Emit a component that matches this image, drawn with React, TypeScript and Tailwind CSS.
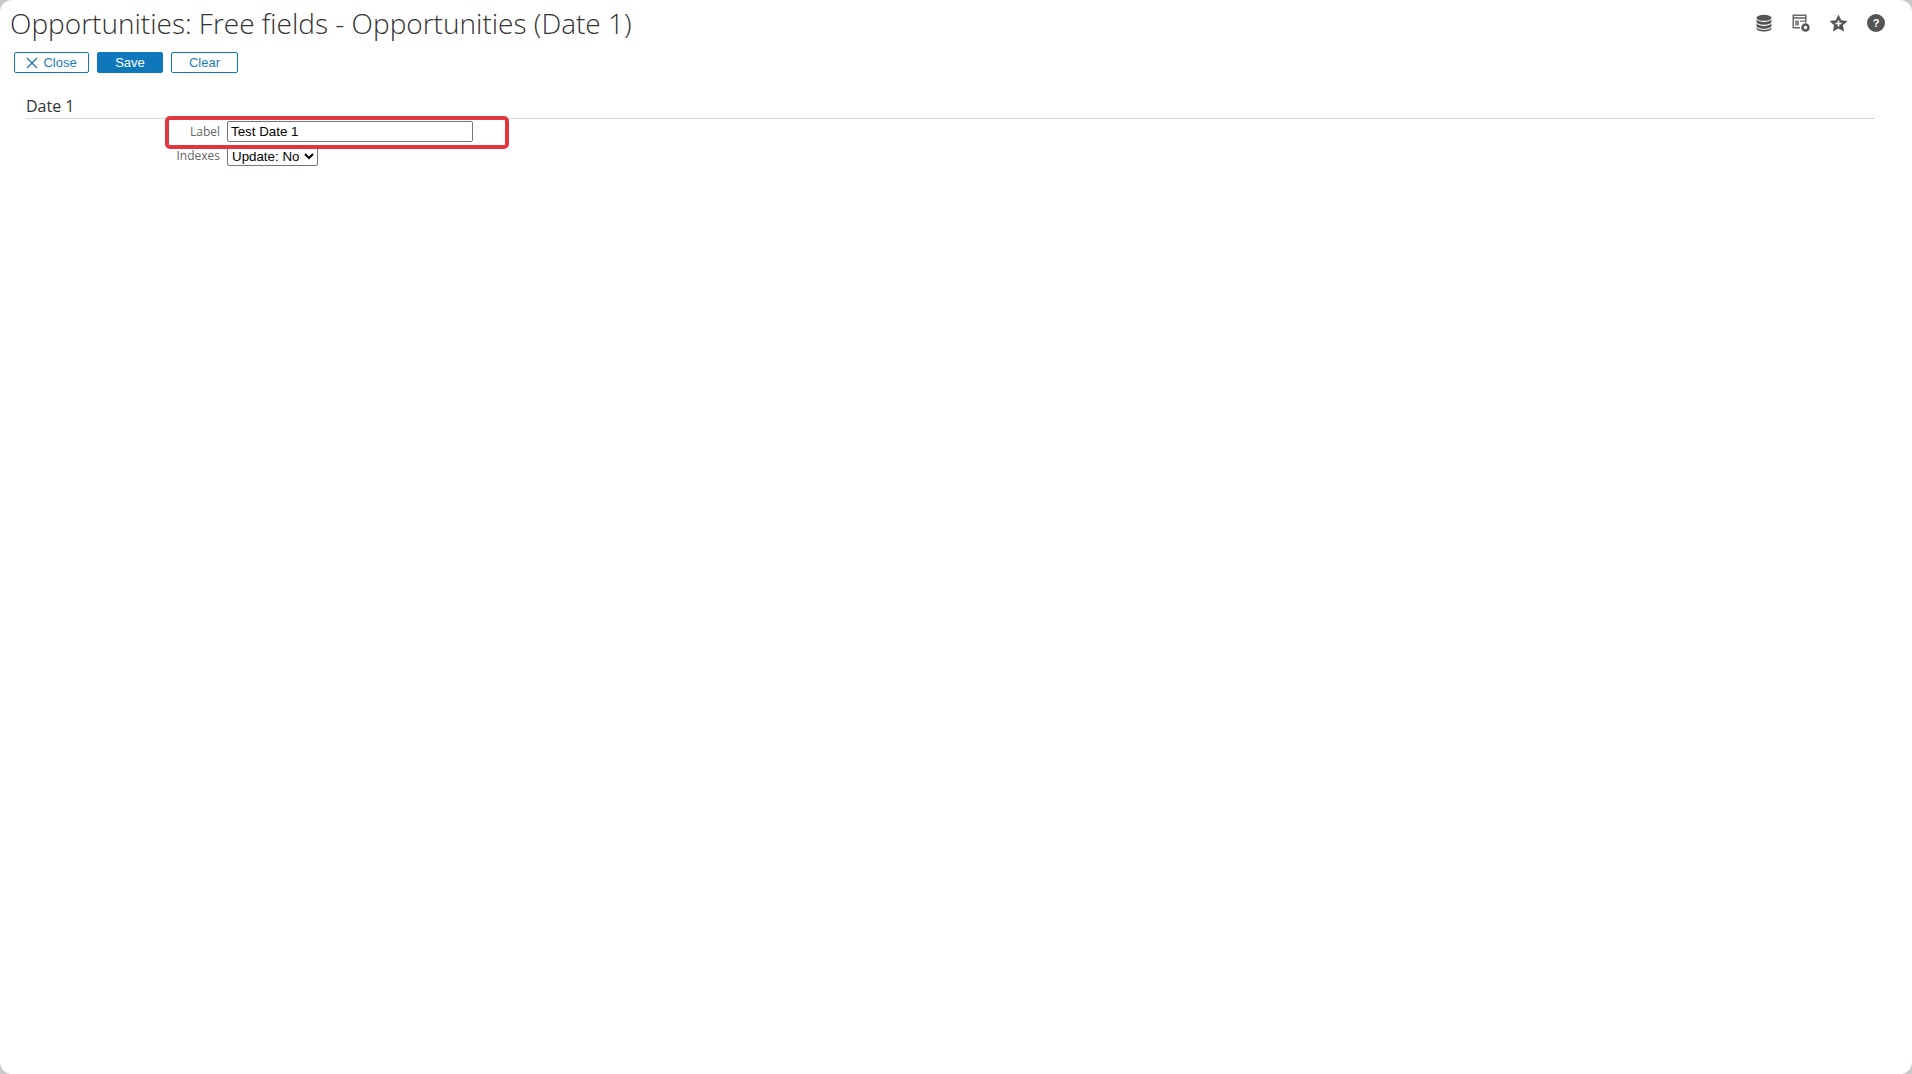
import React from "react";

const os = "font-['Open_Sans',sans-serif]";
const ar = "font-['Liberation_Sans',Arial,sans-serif]";

function Btn({ children, primary, w }: { children: React.ReactNode; primary?: boolean; w: string }) {
  return (
    <button
      className={`${w} h-[21px] flex items-center justify-center rounded-[2px] border border-[#0f78ba] text-[13px] leading-none ${ar} ${
        primary ? "bg-[#0f78ba] text-white" : "bg-white text-[#1f7cb8]"
      }`}
    >
      {children}
    </button>
  );
}

export default function App() {
  return (
    <div className="h-[1074px] w-full overflow-hidden bg-[#c8c8c8]">
      <div className="h-full w-full rounded-[12px] bg-white">
        <div className="flex items-start justify-between pl-[10px] pr-[27px]">
          <h1 className={`${os} pt-[4px] text-[28px] leading-[38px] font-light text-[#333]`}>
            Opportunities: Free fields - Opportunities (Date 1)
          </h1>
          <div className="flex items-center gap-[19px] pt-[14px] text-[#555]">
            <svg width="18" height="18" viewBox="0 0 18 18" fill="#555">
              <ellipse cx="9" cy="3.8" rx="7.5" ry="3" />
              <path d="M1.5 5.6v2.2c0 1.6 3.4 3 7.5 3s7.500-1.400 7.500-3V5.600c-1.300 1.500-4.300 2.300-7.500 2.300S2.800 7.100 1.500 5.600z" />
              <path d="M1.500 9.600v2.200c0 1.600 3.400 3 7.500 3s7.500-1.400 7.500-3V9.600c-1.300 1.500-4.300 2.300-7.500 2.300S2.800 11.100 1.500 9.600z" />
              <path d="M1.500 13.400v1c0 1.600 3.400 3 7.500 3s7.500-1.400 7.500-3v-1c-1.300 1.500-4.300 2.300-7.500 2.300s-6.200-.8-7.500-2.300z" />
            </svg>
            <svg width="18" height="18" viewBox="0 0 18 18" fill="none">
              <path d="M.5.500h14v8h-1.500V2H2v11h6v1.500H.500z" fill="#666" />
              <rect x="2" y="3" width="11" height="2" fill="#888" />
              <rect x="3" y="6.500" width="4" height="5" fill="#888" />
              <rect x="8" y="6.500" width="5" height="1.500" fill="#888" />
              <circle cx="13.500" cy="13.500" r="3" stroke="#555" strokeWidth="2.500" fill="#fff" />
            </svg>
            <svg width="19" height="18" viewBox="0 0 19 18">
              <path
                fillRule="evenodd"
                d="M9.500.500l2.700 5.700 6.300.8-4.600 4.300 1.200 6.200-5.600-3.100-5.600 3.100 1.200-6.200L.500 7l6.300-.8zM8.700 6.500v2.300H6.500v1.500h2.200v2.200h1.600v-2.200h2.200V8.800h-2.200V6.500z"
                fill="#555"
              />
            </svg>
            <svg width="18" height="18" viewBox="0 0 18 18">
              <circle cx="9" cy="9" r="9" fill="#555" />
              <text x="9" y="13" textAnchor="middle" fontSize="11" fontWeight="700" fill="#fff" fontFamily="Liberation Sans">
                ?
              </text>
            </svg>
          </div>
        </div>
        <div className="mt-[10px] flex gap-[8px] pl-[14px]">
          <Btn w="w-[75px]">
            <svg width="12" height="12" viewBox="0 0 12 12" className="mr-[5px]" stroke="#1f7cb8" strokeWidth="1.400" fill="none">
              <path d="M1 1l10 10M11 1L1 11" />
            </svg>
            Close
          </Btn>
          <Btn w="w-[66px]" primary>
            Save
          </Btn>
          <Btn w="w-[67px]">Clear</Btn>
        </div>
        <div className="mt-[21px] mr-[37px] ml-[26px]">
          <div className={`${os} h-[25px] border-b border-[#d8d8d8] text-[16px] leading-[24px] text-[#333]`}>Date 1</div>
          <div className="relative mt-[2px] flex flex-col gap-[4px] pl-[139px]">
            <div className="flex h-[21px] items-center">
              <span className={`${os} w-[62px] pr-[7px] text-right text-[12px] text-[#666]`}>Label</span>
              <input
                readOnly
                value="Test Date 1"
                className={`${ar} h-[21px] w-[246px] rounded-[2px] border border-[#767676] bg-white px-[3px] text-[13.333px] text-black outline-none`}
              />
            </div>
            <div className="flex h-[20px] items-center">
              <span className={`${os} w-[62px] pr-[7px] text-right text-[12px] text-[#666]`}>Indexes</span>
              <select
                defaultValue="No"
                className={`${ar} h-[20px] w-[91px] rounded-[2px] border border-[#767676] bg-white text-[13.333px] text-black`}
                style={{ appearance: "auto" }}
              >
                <option value="No">Update: No</option>
              </select>
            </div>
            <div className="pointer-events-none absolute top-[-5px] left-[139px] h-[33px] w-[344px] rounded-[5px] border-[4px] border-[#e0363f]" />
          </div>
        </div>
      </div>
    </div>
  );
}
